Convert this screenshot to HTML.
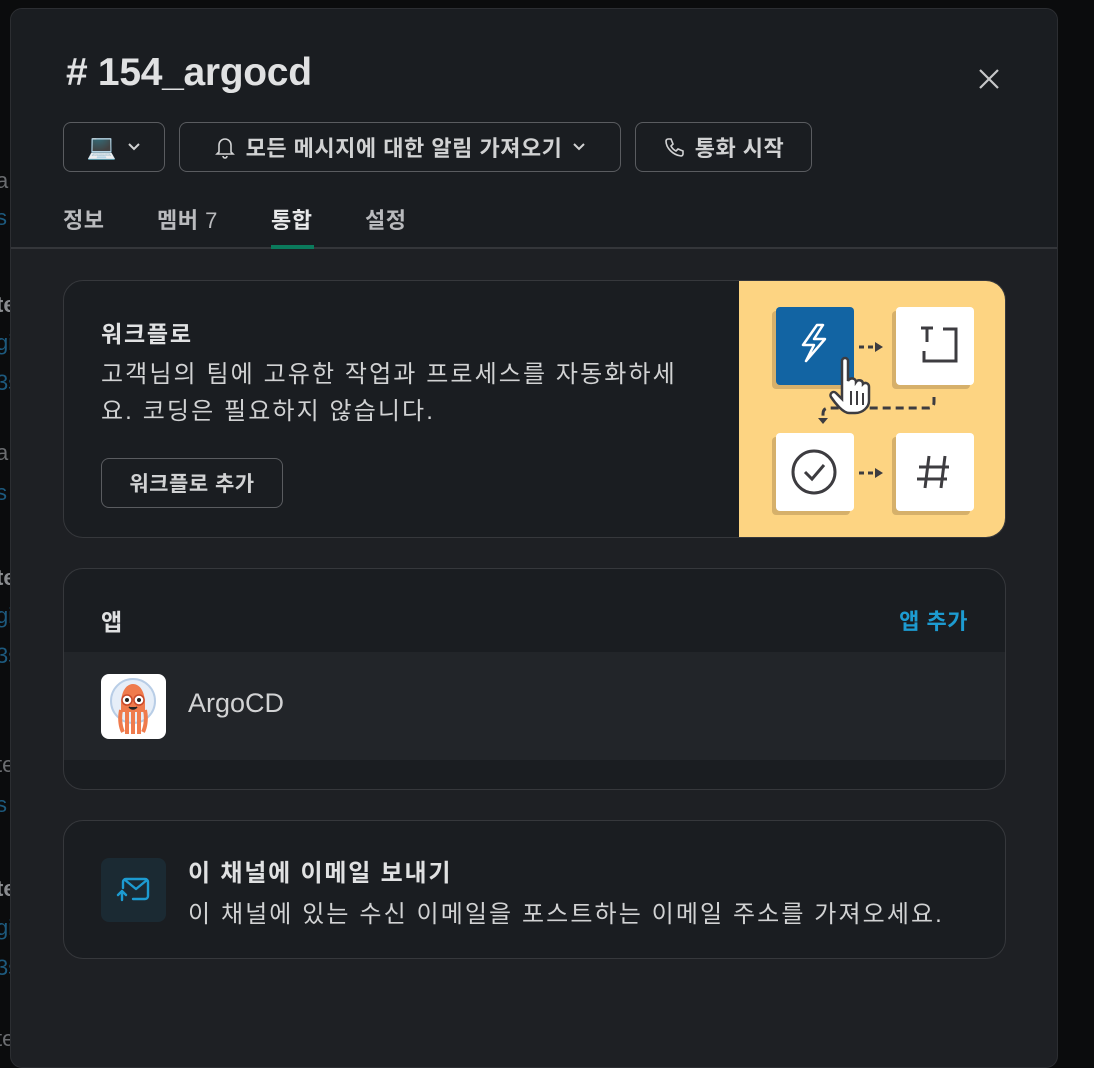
<!DOCTYPE html>
<html><head><meta charset="utf-8"><style>
*{box-sizing:border-box;margin:0;padding:0}
body{width:1094px;height:1054px;overflow:hidden;background:#0b0c0d;font-family:"Liberation Sans","Noto Sans CJK KR",sans-serif;position:relative;color:#d1d2d3}
.bg span{position:absolute;left:-4px;font-size:22px;color:#6b6d70}
.bg span.b{color:#1d5a7e}
.bg span.t{font-weight:bold;color:#8a8c8f}
.modal{position:absolute;left:10px;top:8px;width:1048px;height:1060px;background:#1e2024;border:1px solid #2c2e32;border-radius:12px;overflow:hidden}
.head{height:240px;background:#1a1d21;border-bottom:2px solid #34363a;position:relative}
h1{position:absolute;left:55px;top:42px;font-size:39px;font-weight:bold;color:#e0e1e2;letter-spacing:-0.3px}
.x{position:absolute;left:966px;top:58px}
.btn{position:absolute;top:113px;height:50px;border:1px solid #5a5c60;border-radius:8px;display:flex;align-items:center;justify-content:center;font-size:22px;font-weight:bold;color:#d1d2d3;gap:10px;letter-spacing:0.5px;white-space:nowrap}
.tabs{position:absolute;top:194px;left:52px;font-size:22px;font-weight:bold;color:#b9babd;letter-spacing:0.5px}
.tabs span{position:absolute;white-space:nowrap}
.card{position:absolute;left:52px;width:943px;background:#1a1d21;border:1px solid #36383c;border-radius:20px;overflow:hidden}
.ko{letter-spacing:1.8px}
.kb{letter-spacing:2.1px;font-size:24px}
</style></head><body>
<div class="bg">
<span class="t" style="top:292px">te</span><span class="b" style="top:330px">gi</span><span class="b" style="top:370px">3s</span>
<span style="top:168px">a</span><span class="b" style="top:205px">s</span>
<span style="top:440px">a</span><span class="b" style="top:480px">s</span>
<span class="t" style="top:565px">te</span><span class="b" style="top:603px">gi</span><span class="b" style="top:643px">3s</span>
<span style="top:752px">te</span><span class="b" style="top:792px">s</span>
<span class="t" style="top:876px">te</span><span class="b" style="top:915px">gi</span><span class="b" style="top:955px">3s</span>
<span style="top:1026px">te</span>
</div>
<div class="modal">
<div class="head">
<h1># 154_argocd</h1>
<svg class="x" width="24" height="24" viewBox="0 0 24 24"><path d="M3 3L21 21M21 3L3 21" stroke="#c6c7c9" stroke-width="2.2"/></svg>
<div class="btn" style="left:52px;width:102px"><span style="font-size:24px">💻</span><svg width="14" height="10" viewBox="0 0 14 10"><path d="M2 2l5 5 5-5" stroke="#d1d2d3" stroke-width="2" fill="none"/></svg></div>
<div class="btn" style="left:168px;width:442px"><svg width="22" height="24" viewBox="0 0 22 24"><path d="M5 17V10a6 6 0 0112 0v7l2 2H3z M9 21a2 2 0 004 0" stroke="#d1d2d3" stroke-width="1.6" fill="none"/></svg>모든 메시지에 대한 알림 가져오기<svg width="14" height="10" viewBox="0 0 14 10"><path d="M2 2l5 5 5-5" stroke="#d1d2d3" stroke-width="2" fill="none"/></svg></div>
<div class="btn" style="left:624px;width:177px"><svg width="22" height="22" viewBox="0 0 22 22"><path d="M5 3l3 0 2 5-2 2c1 2 3 4 5 5l2-2 5 2v3c0 1-1 2-2 2C10 19 3 12 3 5c0-1 1-2 2-2z" stroke="#d1d2d3" stroke-width="1.6" fill="none"/></svg>통화 시작</div>
<div class="tabs"><span style="left:0">정보</span><span style="left:94px">멤버 <span style="font-weight:normal;position:static">7</span></span><span style="left:208px;color:#e8e9ea">통합</span><span style="left:302px">설정</span></div>
<div style="position:absolute;left:260px;top:236px;width:43px;height:4px;background:#0b7a5c"></div>
</div>
<div class="card" style="top:271px;height:258px">
<div class="ko" style="position:absolute;left:37px;top:34px;font-size:23px;font-weight:bold;color:#e0e1e2">워크플로</div>
<div class="kb" style="position:absolute;left:37px;top:75px;white-space:nowrap;line-height:37px;color:#d1d2d3">고객님의 팀에 고유한 작업과 프로세스를 자동화하세<br>요. 코딩은 필요하지 않습니다.</div>
<div style="position:absolute;left:37px;top:177px;width:182px;height:50px;border:1px solid #5a5c60;border-radius:8px;font-size:21px;font-weight:bold;display:flex;align-items:center;justify-content:center;letter-spacing:0.5px">워크플로 추가</div>
<div style="position:absolute;left:675px;top:0;width:268px;height:258px;background:#fdd482">
<svg width="268" height="258" viewBox="0 0 268 258">
<g fill="#d6b06a"><rect x="33" y="30" width="78" height="78" rx="4"/><rect x="153" y="30" width="78" height="78" rx="4"/><rect x="33" y="156" width="78" height="78" rx="4"/><rect x="153" y="156" width="78" height="78" rx="4"/></g>
<rect x="37" y="26" width="78" height="78" rx="4" fill="#1264a3"/>
<g fill="#fff"><rect x="157" y="26" width="78" height="78" rx="4"/><rect x="37" y="152" width="78" height="78" rx="4"/><rect x="157" y="152" width="78" height="78" rx="4"/></g>
<path d="M78 44l-14 20h11l-8 16 19-22h-11l9-14z" stroke="#fff" stroke-width="2.5" fill="none" stroke-linejoin="round"/>
<g stroke="#3d3c40" stroke-width="3" fill="none">
<path d="M182 47h12M188 47v14 M204 48h13v32h-32v-10"/>
<circle cx="75" cy="191" r="21"/><path d="M66 191l7 7 12-14"/>
<path d="M190 175l-4 32M206 175l-4 32M180 186h30M178 198h30"/>
<path d="M120 66h14M120 192h14" stroke-dasharray="5 4"/>
<path d="M195 116v5q0 6-6 6H90q-6 0-6 6v5" stroke-dasharray="8 5"/>
</g>
<g fill="#3d3c40"><path d="M136 61l8 5-8 5zM136 187l8 5-8 5zM79 137l5 6 5-6z"/></g>
<path d="M103 80c0-4 6-4 6 0v20c2-4 8-3 8 1 2-3 7-2 7 2 2-2 6-1 6 3v14c0 6-6 12-14 12h-6c-6 0-14-10-18-16-2-3 2-7 5-4l6 6z" fill="#fff" stroke="#3d3c40" stroke-width="2.5"/>
<path d="M112 110v14M118 110v14M124 112v12" stroke="#3d3c40" stroke-width="2"/>
</svg></div>
</div>
<div class="card" style="top:559px;height:222px">
<div style="position:absolute;left:37px;top:34px;font-size:23px;font-weight:bold;color:#e0e1e2">앱</div>
<div style="position:absolute;right:37px;top:35px;font-size:22px;font-weight:bold;color:#1d9bd1;letter-spacing:0.5px">앱 추가</div>
<div style="position:absolute;left:0;top:83px;width:943px;height:108px;background:#222529">
<div style="position:absolute;left:37px;top:22px;width:65px;height:65px;background:#fff;border-radius:8px;overflow:hidden">
<svg width="65" height="65" viewBox="0 0 65 65"><circle cx="32" cy="27" r="22" fill="#e6eef8" stroke="#b8cde6" stroke-width="2"/><path d="M20 30c0-12 5-20 12-20s12 8 12 20v8H20z" fill="#ef7b4d"/><path d="M20 36c-2 10 0 18 2 22M26 38v22M32 38v22M38 38v22M44 36c2 10 0 18-2 22" stroke="#ef7b4d" stroke-width="4"/><circle cx="26" cy="26" r="5" fill="#fff" stroke="#c9492a" stroke-width="1.5"/><circle cx="38" cy="26" r="5" fill="#fff" stroke="#c9492a" stroke-width="1.5"/><circle cx="26" cy="26" r="2" fill="#222"/><circle cx="38" cy="26" r="2" fill="#222"/><path d="M28 33q4 4 8 0" stroke="#222" stroke-width="1.5" fill="#222"/></svg></div>
<div style="position:absolute;left:124px;top:36px;font-size:27px;color:#d1d2d3">ArgoCD</div>
</div>
</div>
<div class="card" style="top:811px;height:139px">
<div style="position:absolute;left:37px;top:37px;width:65px;height:64px;background:#1b2a33;border-radius:8px">
<svg width="65" height="64" viewBox="0 0 65 64"><path d="M22 30v-6a3 3 0 013-3h19a3 3 0 013 3v14a3 3 0 01-3 3H32M24 22l11 9 11-9M21 42v-9M17 37l4-4 4 4" stroke="#1d9bd1" stroke-width="2.4" fill="none" stroke-linecap="round" stroke-linejoin="round"/></svg></div>
<div class="ko" style="position:absolute;left:124px;top:32px;font-size:24px;font-weight:bold;color:#e0e1e2">이 채널에 이메일 보내기</div>
<div class="kb" style="position:absolute;left:124px;top:73px;color:#d1d2d3;white-space:nowrap">이 채널에 있는 수신 이메일을 포스트하는 이메일 주소를 가져오세요.</div>
</div>
</div>
</body></html>
